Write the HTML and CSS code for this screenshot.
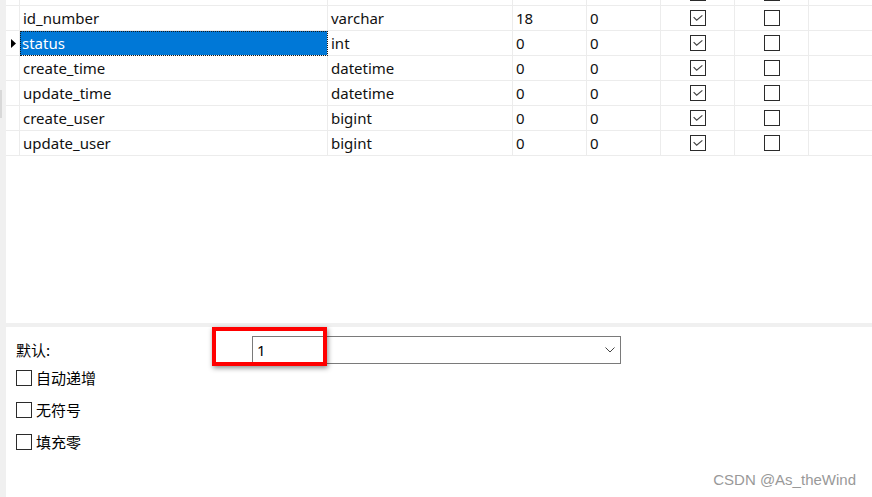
FILE: index.html
```html
<!DOCTYPE html>
<html lang="zh">
<head>
<meta charset="utf-8">
<title>表设计</title>
<link rel="stylesheet" href="styles.css">
</head>
<body>
<div class="app">
  <div class="strip"><div class="strip-thumb"></div></div>
  <div class="main">
    <div class="grid-view">
      <div class="grid">
        <div class="row">
          <div class="cell hdr"></div><div class="cell"></div><div class="cell"></div><div class="cell"></div><div class="cell"></div>
          <div class="cell ck"><span class="box"><svg viewBox="0 0 16 16"><polyline points="3,7 6.5,10.5 13,5"/></svg></span></div>
          <div class="cell ck"><span class="box"></span></div><div class="cell last"></div>
        </div>
        <div class="row">
          <div class="cell hdr"></div><div class="cell">id_number</div><div class="cell">varchar</div><div class="cell">18</div><div class="cell">0</div>
          <div class="cell ck"><span class="box"><svg viewBox="0 0 16 16"><polyline points="3,7 6.5,10.5 13,5"/></svg></span></div>
          <div class="cell ck"><span class="box"></span></div><div class="cell last"></div>
        </div>
        <div class="row">
          <div class="cell hdr"><svg class="arrow" viewBox="0 0 6 9"><polygon points="0,0 5,4.5 0,9"/></svg></div><div class="cell sel">status</div><div class="cell">int</div><div class="cell">0</div><div class="cell">0</div>
          <div class="cell ck"><span class="box"><svg viewBox="0 0 16 16"><polyline points="3,7 6.5,10.5 13,5"/></svg></span></div>
          <div class="cell ck"><span class="box"></span></div><div class="cell last"></div>
        </div>
        <div class="row">
          <div class="cell hdr"></div><div class="cell">create_time</div><div class="cell">datetime</div><div class="cell">0</div><div class="cell">0</div>
          <div class="cell ck"><span class="box"><svg viewBox="0 0 16 16"><polyline points="3,7 6.5,10.5 13,5"/></svg></span></div>
          <div class="cell ck"><span class="box"></span></div><div class="cell last"></div>
        </div>
        <div class="row">
          <div class="cell hdr"></div><div class="cell">update_time</div><div class="cell">datetime</div><div class="cell">0</div><div class="cell">0</div>
          <div class="cell ck"><span class="box"><svg viewBox="0 0 16 16"><polyline points="3,7 6.5,10.5 13,5"/></svg></span></div>
          <div class="cell ck"><span class="box"></span></div><div class="cell last"></div>
        </div>
        <div class="row">
          <div class="cell hdr"></div><div class="cell">create_user</div><div class="cell">bigint</div><div class="cell">0</div><div class="cell">0</div>
          <div class="cell ck"><span class="box"><svg viewBox="0 0 16 16"><polyline points="3,7 6.5,10.5 13,5"/></svg></span></div>
          <div class="cell ck"><span class="box"></span></div><div class="cell last"></div>
        </div>
        <div class="row">
          <div class="cell hdr"></div><div class="cell">update_user</div><div class="cell">bigint</div><div class="cell">0</div><div class="cell">0</div>
          <div class="cell ck"><span class="box"><svg viewBox="0 0 16 16"><polyline points="3,7 6.5,10.5 13,5"/></svg></span></div>
          <div class="cell ck"><span class="box"></span></div><div class="cell last"></div>
        </div>
      </div>
    </div>
    <div class="splitter"></div>
    <div class="props">
      <div class="prop-row">
        <div class="prop-label">默认:</div>
        <div class="combo">
          <span class="combo-text">1</span>
          <svg class="chev" viewBox="0 0 10 6"><polyline points="0.5,0.5 5,5 9.5,0.5"/></svg>
        </div>
      </div>
      <div class="checks">
        <label class="check"><span class="cbox"></span><span>自动递增</span></label>
        <label class="check"><span class="cbox"></span><span>无符号</span></label>
        <label class="check"><span class="cbox"></span><span>填充零</span></label>
      </div>
    </div>
  </div>
</div>
<div class="mark"></div>
<div class="watermark">CSDN @As_theWind</div>
</body>
</html>
```

FILE: styles.css
```css
* { box-sizing: border-box; }
html, body { margin: 0; padding: 0; }
body {
  width: 872px;
  height: 497px;
  overflow: hidden;
  background: #fff;
  font-family: "Noto Sans", "Noto Sans CJK SC", sans-serif;
  font-size: 15px;
  color: #000;
  position: relative;
}
.app { display: flex; height: 497px; }
.strip {
  width: 6px;
  flex: none;
  background: #f0f0f0;
  position: relative;
}
.strip-thumb {
  position: absolute;
  left: 0;
  top: 90px;
  width: 2px;
  height: 28px;
  background: #d8d8d8;
}
.main { flex: 1; display: flex; flex-direction: column; min-width: 0; }
.grid-view { height: 323px; overflow: hidden; background: #fff; }
.grid { margin-top: -19px; }
.row {
  display: grid;
  grid-template-columns: 14px 308px 185px 74px 74px 74px 74px 1fr;
  height: 25px;
}
.cell {
  height: 25px;
  border-right: 1px solid #ececec;
  border-bottom: 1px solid #ececec;
  padding-left: 3px;
  line-height: 24px;
  white-space: nowrap;
  overflow: hidden;
  color: #111;
}
.cell.hdr { padding: 0; display: flex; align-items: center; justify-content: flex-start; }
.cell.last { border-right: 0; }
.arrow { width: 6px; height: 9px; margin-left: 5px; fill: #000; }
.cell.sel {
  background: #0078d7;
  color: #fff;
  outline: 1px dotted #1a1a1a;
  outline-offset: -1px;
  padding-left: 2px;
}
.cell.ck { display: flex; align-items: center; justify-content: center; padding: 0 0 0 1px; }
.box {
  width: 16px;
  height: 16px;
  border: 1px solid #2b2b2b;
  background: #fff;
  display: block;
}
.box svg { display: block; width: 14px; height: 14px; fill: none; stroke: #444; stroke-width: 1.4; }
.splitter { height: 4px; background: #f0f0f0; flex: none; }
.props { flex: 1; padding: 9px 0 0 10px; }
.prop-row { display: flex; align-items: center; height: 28px; }
.prop-label {
  width: 236px;
  font-family: "Noto Sans CJK SC", sans-serif;
  font-size: 15px;
  line-height: 16px;
}
.combo {
  width: 369px;
  height: 28px;
  border: 1px solid #7a7a7a;
  display: flex;
  align-items: center;
  justify-content: space-between;
  padding: 0 5px 0 4px;
}
.combo-text { line-height: 20px; }
.chev { width: 10px; height: 6px; fill: none; stroke: #444; stroke-width: 1; }
.checks { display: flex; flex-direction: column; gap: 16px; margin-top: 6px; }
.check {
  display: flex;
  align-items: center;
  gap: 4px;
  height: 16px;
  line-height: 16px;
  font-family: "Noto Sans CJK SC", sans-serif;
  font-size: 15px;
}
.cbox { width: 16px; height: 16px; border: 1px solid #2b2b2b; flex: none; }
.mark {
  position: absolute;
  left: 212px;
  top: 327px;
  width: 115px;
  height: 39px;
  border: 4px solid #ff0000;
  box-shadow: 1px 2px 5px rgba(0,0,0,0.45);
}
.watermark {
  position: absolute;
  right: 16px;
  bottom: 10px;
  font-family: "Liberation Sans", Arial, sans-serif;
  font-size: 15px;
  line-height: 15px;
  color: #999;
}
```
